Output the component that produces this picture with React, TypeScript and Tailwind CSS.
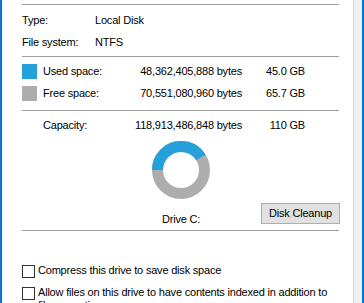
import React from "react";

interface SpaceRowProps {
  color: string;
  label: string;
  bytes: string;
  size: string;
}

/**
 * One row of the used / free space legend
 */
function SpaceRow({ color, label, bytes, size }: SpaceRowProps) {
  return (
    <div className="flex h-[15px] items-center">
      <div className="w-[21px]">
        <div className={`h-[15px] w-[15px] ${color}`} />
      </div>
      <div className="flex w-[199px] justify-between">
        <span>{label}</span>
        <span>{bytes}</span>
      </div>
      <div className="w-[63px] text-right">{size}</div>
    </div>
  );
}

function Separator({ className = "" }: { className?: string }) {
  return <div className={`h-px w-[317px] bg-[#a0a0a0] ${className}`} />;
}

function Checkbox({ children, className = "" }: { children: React.ReactNode; className?: string }) {
  return (
    <div className={`flex items-start ${className}`}>
      <div className="mt-px h-[13px] w-[13px] shrink-0 border border-[#333333] bg-white" />
      <div className="ml-[3px]">{children}</div>
    </div>
  );
}

/**
 * Usage ring: blue share starts at 9 o'clock and runs clockwise
 */
function UsageRing({ used }: { used: number }) {
  const r = 23.5;
  const c = 2 * Math.PI * r;
  return (
    <svg width="58" height="58" viewBox="0 0 58 58">
      <circle cx="29" cy="29" r={r} fill="none" stroke="#adadad" strokeWidth="11" />
      <circle
        cx="29"
        cy="29"
        r={r}
        fill="none"
        stroke="#26a0da"
        strokeWidth="11"
        strokeDasharray={`${c * used} ${c}`}
        transform="rotate(180 29 29)"
      />
    </svg>
  );
}

export default function App() {
  return (
    <div className="flex h-[303px] w-[364px] overflow-hidden bg-[#f0f0f0] font-['Liberation_Sans',Arial,sans-serif] text-[11px] leading-[13px] tracking-[-0.2px] text-black">
      <div className="w-[2px] bg-[#0078d7]" />
      <div className="w-[351px] bg-white pl-[20px] pt-[4px]">
        <Separator />

        <div className="mt-[9px] flex">
          <span className="w-[73px]">Type:</span>
          <span>Local Disk</span>
        </div>
        <div className="mt-[9px] flex">
          <span className="w-[73px]">File system:</span>
          <span>NTFS</span>
        </div>

        <Separator className="mt-[7px]" />

        <div className="mt-[7px]">
          <SpaceRow color="bg-[#26a0da]" label="Used space:" bytes="48,362,405,888 bytes" size="45.0 GB" />
        </div>
        <div className="mt-[7px]">
          <SpaceRow color="bg-[#adadad]" label="Free space:" bytes="70,551,080,960 bytes" size="65.7 GB" />
        </div>

        <Separator className="mt-[9px]" />

        <div className="mt-[8px] flex">
          <div className="w-[21px]" />
          <div className="flex w-[199px] justify-between">
            <span>Capacity:</span>
            <span>118,913,486,848 bytes</span>
          </div>
          <div className="w-[63px] text-right">110 GB</div>
        </div>

        <div className="mt-[9px] flex w-[317px] justify-center">
          <UsageRing used={45.0 / 110.7} />
        </div>

        <div className="mt-[4px] grid h-[23px] w-[318px] grid-cols-[1fr_auto_1fr]">
          <div />
          <span className="self-end">Drive C:</span>
          <button className="h-[21px] w-[79px] self-start justify-self-end border border-[#adadad] bg-[#e1e1e1] text-[11px] leading-[13px] tracking-[-0.2px]">
            Disk Cleanup
          </button>
        </div>

        <Separator className="mt-[4px]" />

        <Checkbox className="mt-[33px]">Compress this drive to save disk space</Checkbox>
        <Checkbox className="mt-[8px]">
          Allow files on this drive to have contents indexed in addition to
          <br />
          file properties
        </Checkbox>
      </div>
      <div className="w-px bg-[#d9d9d9]" />
      <div className="w-[8px]" />
      <div className="w-[2px] bg-[#0078d7]" />
    </div>
  );
}
